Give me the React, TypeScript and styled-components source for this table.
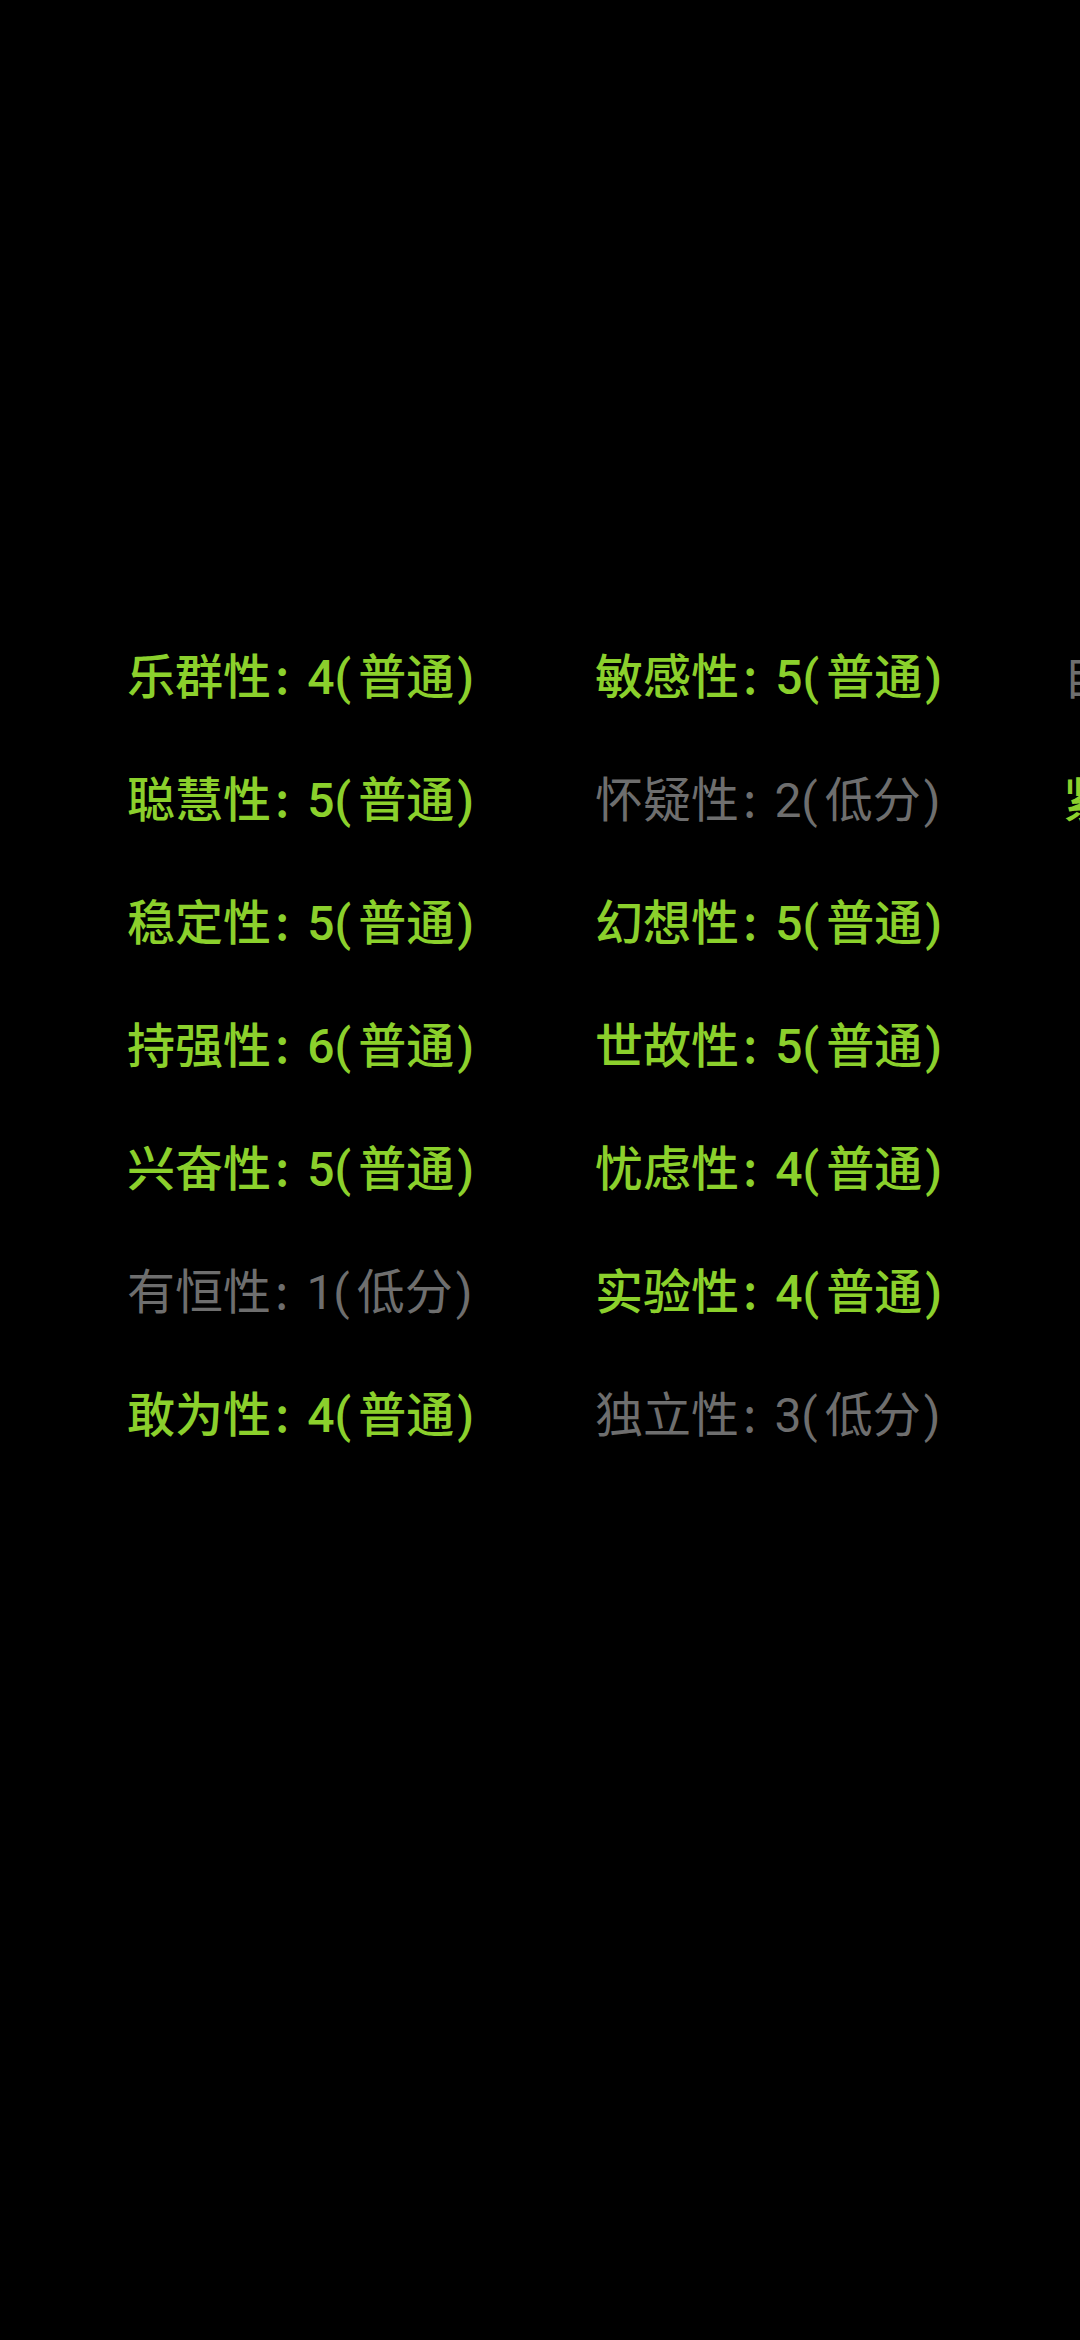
import React from "react";
import styled, { createGlobalStyle } from "styled-components";

const Global = createGlobalStyle`
  html, body {
    margin: 0;
    padding: 0;
    background: #000;
    overflow: hidden;
  }
  body {
    width: 1080px;
    height: 2340px;
    font-family: Roboto, "Noto Sans CJK SC", sans-serif;
  }
`;

const Screen = styled.main`
  width: 1080px;
  height: 2340px;
  background: #000;
  overflow: hidden;
  box-sizing: border-box;
  padding: 614px 0 0 127px;
`;

const FactorGrid = styled.div`
  display: grid;
  grid-auto-flow: column;
  grid-template-rows: repeat(7, 123px);
  grid-auto-columns: 468px;
  width: max-content;
`;

const Factor = styled.div<{ $low: boolean }>`
  align-self: center;
  white-space: nowrap;
  font-family: Roboto, "Noto Sans CJK SC", sans-serif;
  font-size: 48px;
  line-height: 64px;
  font-weight: ${(p) => (p.$low ? 400 : 500)};
  color: ${(p) => (p.$low ? "#6e6e6e" : "#8bd02c")};
`;

const Colon = styled.span`
  margin: 0 18px 0 4px;
  font-family: "Noto Sans CJK SC", sans-serif;
`;

const Paren = styled.span<{ $open?: boolean }>`
  margin: ${(p) => (p.$open ? "0 7px 0 0" : "0 0 0 3px")};
`;

type Item = { name: string; score: number };

const items: Item[] = [
  { name: "乐群性", score: 4 },
  { name: "聪慧性", score: 5 },
  { name: "稳定性", score: 5 },
  { name: "持强性", score: 6 },
  { name: "兴奋性", score: 5 },
  { name: "有恒性", score: 1 },
  { name: "敢为性", score: 4 },
  { name: "敏感性", score: 5 },
  { name: "怀疑性", score: 2 },
  { name: "幻想性", score: 5 },
  { name: "世故性", score: 5 },
  { name: "忧虑性", score: 4 },
  { name: "实验性", score: 4 },
  { name: "独立性", score: 3 },
  { name: "自律性", score: 3 },
  { name: "紧张性", score: 5 },
];

export default function App() {
  return (
    <>
      <Global />
      <Screen>
        <FactorGrid>
          {items.map((it) => {
            const low = it.score <= 3;
            return (
              <Factor key={it.name} $low={low}>
                {it.name}
                <Colon>:</Colon>
                {it.score}
                <Paren $open>(</Paren>
                {low ? "低分" : "普通"}
                <Paren>)</Paren>
              </Factor>
            );
          })}
        </FactorGrid>
      </Screen>
    </>
  );
}
